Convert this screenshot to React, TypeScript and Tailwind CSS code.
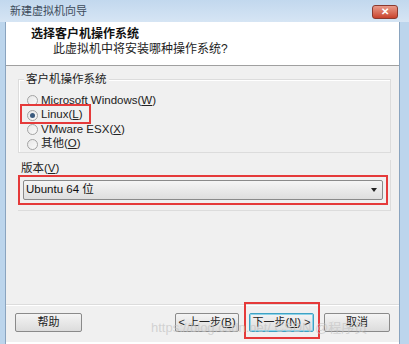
import React from 'react'

const font = 'font-["Liberation_Sans","Noto_Sans_CJK_SC",sans-serif]'

function Radio({ label, checked }: { label: React.ReactNode; checked?: boolean }) {
    return (
        <div className="flex items-center h-[13px] gap-[3px]">
            <span className="w-[11px] h-[11px] rounded-full border border-[#a3a3a3] bg-gradient-to-br from-[#e6e6e6] to-[#fbfbfb] flex items-center justify-center">
                {checked && <span className="w-[5px] h-[5px] rounded-full bg-[#3a5a7e]" />}
            </span>
            <span className="text-[11.5px] text-[#222] leading-none">{label}</span>
        </div>
    )
}

function Button({ children, focused }: { children: React.ReactNode; focused?: boolean }) {
    return (
        <div
            className={`h-[19px] flex items-center justify-center rounded-[2px] border text-[11px] text-[#222] bg-gradient-to-b from-[#f4f4f4] to-[#dcdcdc] ${
                focused ? 'border-[#3fa2c4] shadow-[inset_0_0_0_1px_#8fd3e8]' : 'border-[#8a8a8a]'
            }`}
        >
            {children}
        </div>
    )
}

export default function App() {
    return (
        <div className={`w-[409px] h-[344px] flex flex-col bg-[#bcd5ec] overflow-hidden ${font}`}>
            {/* title bar */}
            <div className="h-[22px] shrink-0 flex items-center justify-between pl-[10px] pr-[11px] bg-gradient-to-b from-[#c2d8ee] to-[#d6e5f4]">
                <span className="text-[11px] text-[#3c4a5a] leading-none">新建虚拟机向导</span>
                <div className="w-[26px] h-[14px] mt-[2px] rounded-[3px] border border-[#8a3a30] bg-gradient-to-b from-[#e99a8a] to-[#c8412c] flex items-center justify-center">
                    <span className="text-white text-[10px] font-bold leading-none">✕</span>
                </div>
            </div>
            <div className="flex-1 flex ml-[5px] mr-[9px] border-l border-r border-[#8aa4bf]">
                <div className="flex-1 flex flex-col">
                    {/* header */}
                    <div className="h-[44px] shrink-0 bg-white border-b border-[#a0a0a0] pl-[25px] pt-[5px]">
                        <div className="text-[12px] font-bold text-[#111] leading-[15px]">选择客户机操作系统</div>
                        <div className="text-[12px] text-[#222] leading-[15px] pl-[22px]">此虚拟机中将安装哪种操作系统?</div>
                    </div>
                    {/* body */}
                    <div className="flex-1 flex flex-col bg-[#f0f0f0] pl-[12px] pr-[8px]">
                        <div className="mt-[13px] border border-[#dcdcdc] shadow-[inset_1px_1px_0_#fff] h-[74px] relative pl-[8px]">
                            <span className="absolute -top-[8px] left-[5px] px-[2px] bg-[#f0f0f0] text-[11.5px] text-[#222] leading-[14px]">
                                客户机操作系统
                            </span>
                            <div className="flex flex-col gap-[1.5px] pt-[14px]">
                                <Radio label={<>Microsoft Windows(<u>W</u>)</>} />
                                <div className="relative">
                                    <Radio checked label={<>Linux(<u>L</u>)</>} />
                                    <div className="absolute -left-[7px] -top-[5px] w-[71px] h-[20px] border-2 border-[#e53a3a]" />
                                </div>
                                <Radio label={<>VMware ESX(<u>X</u>)</>} />
                                <Radio label={<>其他(<u>O</u>)</>} />
                            </div>
                        </div>
                        <div className="mt-[7px] border-b border-r border-[#dcdcdc] h-[51px] relative">
                            <span className="absolute top-[1px] left-[3px] text-[11.5px] text-[#222] leading-[14px]">
                                版本(<u>V</u>)
                            </span>
                            <div className="mt-[15px] border-2 border-[#e53a3a] h-[30px] mr-[2px] p-[3px]">
                                <div className="h-[20px] border border-[#8a8a8a] rounded-[2px] bg-gradient-to-b from-[#f5f5f5] to-[#dedede] flex items-center justify-between pl-[2px] pr-[5px]">
                                    <span className="text-[11.5px] text-[#111] leading-none">Ubuntu 64 位</span>
                                    <span className="w-0 h-0 border-l-[3.5px] border-r-[3.5px] border-t-[4px] border-l-transparent border-r-transparent border-t-[#222]" />
                                </div>
                            </div>
                        </div>
                        <div className="flex-1" />
                    </div>
                    {/* footer */}
                    <div className="h-[38px] shrink-0 bg-[#f0f0f0] border-t border-[#dcdcdc] shadow-[inset_0_1px_0_#fff] relative flex items-start pt-[8px] px-[9px]">
                        <div className="w-[67px]">
                            <Button>帮助</Button>
                        </div>
                        <div className="flex-1" />
                        <div className="w-[64px] mr-[10px]">
                            <Button>&lt; 上一步(<u>B</u>)</Button>
                        </div>
                        <div className="w-[65px] mr-[10px] relative">
                            <Button focused>下一步(<u>N</u>) &gt;</Button>
                            <div className="absolute -left-[5px] -top-[11px] w-[76px] h-[37px] border-2 border-[#e53a3a]" />
                        </div>
                        <div className="w-[66px]">
                            <Button>取消</Button>
                        </div>
                        <span className="absolute left-[145px] top-[16px] text-[13px] text-[#c4c4c4]/70 leading-none whitespace-nowrap pointer-events-none">
                            https://blog.csdn.net/ CSDN @程序员
                        </span>
                    </div>
                    <div className="h-[2px] bg-white" />
                </div>
            </div>
        </div>
    )
}
